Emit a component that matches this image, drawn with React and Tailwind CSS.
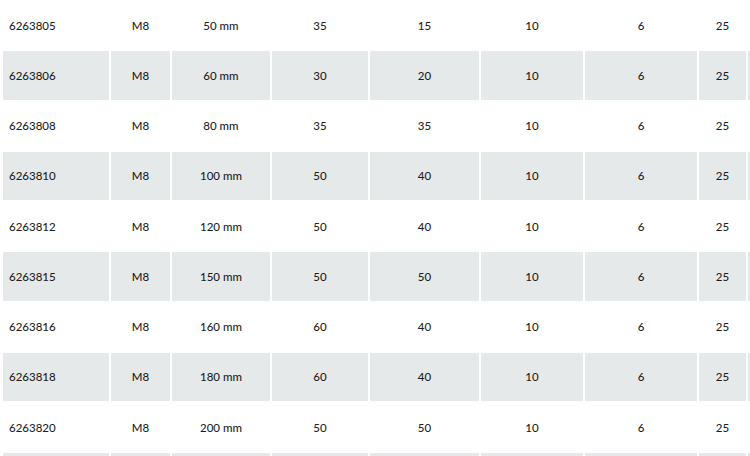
import React from 'react';

const rows = [
  ['6263805', 'M8', '50 mm', '35', '15', '10', '6', '25'],
  ['6263806', 'M8', '60 mm', '30', '20', '10', '6', '25'],
  ['6263808', 'M8', '80 mm', '35', '35', '10', '6', '25'],
  ['6263810', 'M8', '100 mm', '50', '40', '10', '6', '25'],
  ['6263812', 'M8', '120 mm', '50', '40', '10', '6', '25'],
  ['6263815', 'M8', '150 mm', '50', '50', '10', '6', '25'],
  ['6263816', 'M8', '160 mm', '60', '40', '10', '6', '25'],
  ['6263818', 'M8', '180 mm', '60', '40', '10', '6', '25'],
  ['6263820', 'M8', '200 mm', '50', '50', '10', '6', '25'],
];

const widths = [106, 59, 98, 96, 109, 102, 112, 47, 60];

function Row({ cells, shaded }) {
  return (
    <tr className={shaded ? 'bg-[#e6e9e9]' : 'bg-white'}>
      {cells.map((c, i) => (
        <td
          key={i}
          className={`h-[48.25px] p-0 ${i === 0 ? 'text-left pl-[6px]' : 'text-center'}`}
        >
          {c}
        </td>
      ))}
    </tr>
  );
}

export default function App() {
  const blank = Array(9).fill('');
  return (
    <div className="w-[750px] h-[456px] overflow-hidden bg-white">
      <table
        className="table-fixed border-separate border-spacing-[2px] ml-px mt-[-51.25px] text-[11.5px] font-medium text-[#1f1f1f] w-[803px]"
        style={{ fontFamily: 'Lato, "Open Sans", sans-serif' }}
      >
        <colgroup>
          {widths.map((w, i) => (
            <col key={i} style={{ width: w }} />
          ))}
        </colgroup>
        <tbody>
          <Row cells={blank} shaded />
          {rows.map((r, i) => (
            <Row key={r[0]} cells={[...r, '']} shaded={i % 2 === 1} />
          ))}
          <Row cells={blank} shaded />
        </tbody>
      </table>
    </div>
  );
}
